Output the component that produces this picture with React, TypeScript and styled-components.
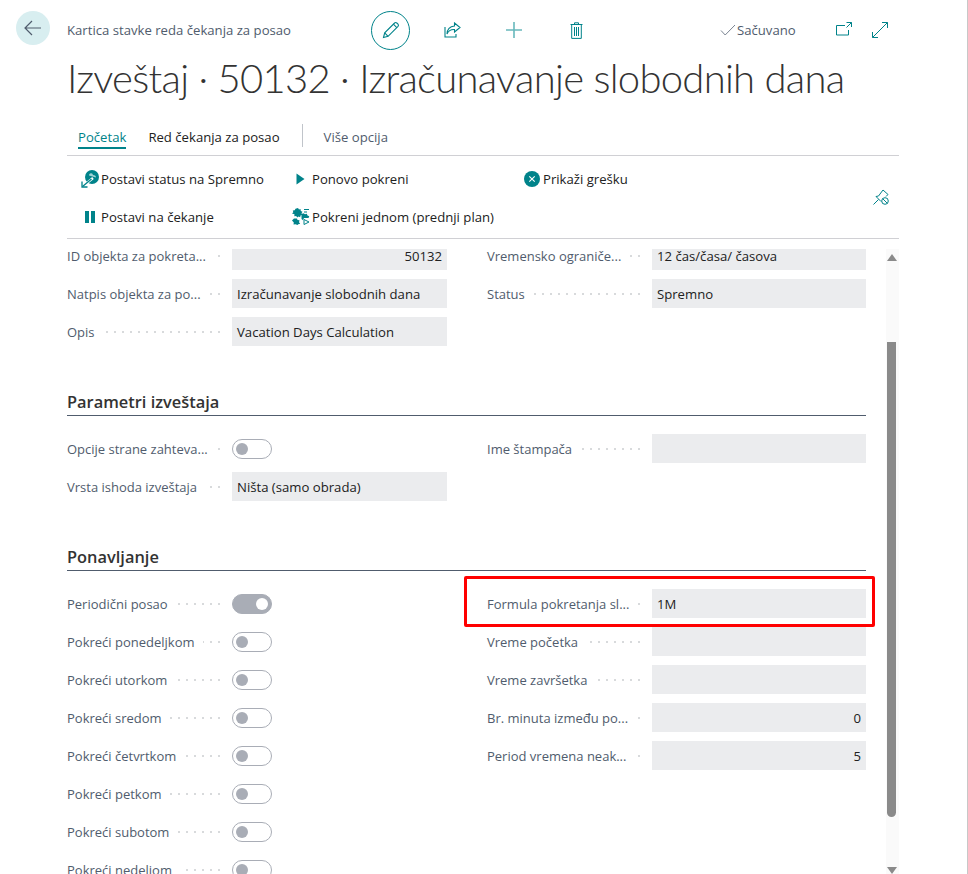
import styled, { createGlobalStyle } from 'styled-components';

const teal = '#00838a';
const slate = '#505c6d';
const ink = '#212121';

const GlobalStyle = createGlobalStyle`
  html, body {
    margin: 0;
    padding: 0;
    background: #fff;
    font-family: "Open Sans", "Liberation Sans", sans-serif;
    overflow: hidden;
  }
`

const Page = styled.div`
  width: 967px;
  height: 874px;
  border-right: 1px solid #c8c8c8;
  display: flex;
  flex-direction: column;
  overflow: hidden;
  background: #fff;
`

const Header = styled.div`
  display: flex;
  align-items: center;
  height: 60px;
  padding-left: 16px;
  flex: none;
`

const BackButton = styled.div`
  width: 34px;
  height: 34px;
  border-radius: 50%;
  background: #d8eef0;
  display: flex;
  align-items: center;
  justify-content: center;
  margin: -4px 17px 0 0;
`

const Breadcrumb = styled.div`
  flex: 0 0 304px;
  font-size: 13.15px;
  color: ${slate};
`

const EditButton = styled.div`
  width: 37px;
  height: 37px;
  border: 1px solid ${teal};
  border-radius: 50%;
  display: flex;
  align-items: center;
  justify-content: center;
  margin-right: 11px;
`

const HeaderAction = styled.div`
  width: 62px;
  display: flex;
  justify-content: center;
`

const Saved = styled.div`
  display: flex;
  align-items: center;
  gap: 1px;
  margin-left: 113px;
  font-size: 13.15px;
  color: ${slate};
`

const WindowActions = styled.div`
  display: flex;
  gap: 20px;
  margin-left: 40px;
`

const Title = styled.h1`
  margin: 0;
  padding-left: 67px;
  height: 46px;
  line-height: 37px;
  font-family: Lato, "Open Sans", sans-serif;
  font-size: 40px;
  font-weight: 300;
  letter-spacing: -0.72px;
  color: #333;
  white-space: nowrap;
  flex: none;
`

const Tabs = styled.div`
  display: flex;
  align-items: flex-start;
  height: 36px;
  margin: 13px 68px 0 67px;
  padding-left: 11px;
  border-bottom: 1px solid #d0d0d4;
  flex: none;
`

const Tab = styled.div<{ $active?: boolean; $muted?: boolean }>`
  height: 22px;
  margin-top: 6px;
  margin-right: 22px;
  line-height: 24px;
  font-size: 13.15px;
  color: ${p => (p.$active ? teal : p.$muted ? slate : ink)};
  border-bottom: ${p => (p.$active ? `2px solid ${teal}` : 'none')};
`

const TabDivider = styled.div`
  width: 1px;
  height: 23px;
  margin: 5px 21px 0 0;
  background: #c0c4ca;
`

const ActionBar = styled.div`
  display: flex;
  align-items: center;
  height: 82px;
  margin: 0 68px 0 67px;
  padding-left: 13px;
  border-bottom: 1px solid #d0d0d4;
  flex: none;
`

const ActionGrid = styled.div`
  display: grid;
  grid-template-columns: 211px 231px 1fr;
  grid-auto-rows: 38px;
  flex: 1;
`

const Action = styled.div`
  display: flex;
  align-items: center;
  gap: 2px;
  padding-top: 1px;
  font-size: 13.15px;
  color: ${ink};
  white-space: nowrap;
`

const ActionIcon = styled.span`
  width: 19px;
  height: 19px;
  display: flex;
  align-items: center;
  justify-content: center;
  flex: none;
`

const PinButton = styled.div`
  display: flex;
  margin-right: 10px;
`

const Body = styled.div`
  flex: 1;
  min-height: 0;
  display: flex;
  margin-top: 10px;
  margin-right: 68px;
`

const Viewport = styled.div`
  flex: 1;
  overflow: hidden;
  padding: 0 20px 0 67px;
`

const Content = styled.div`
  margin-top: -8px;
`

const FieldGrid = styled.div`
  display: grid;
  grid-template-columns: 380px 379px;
  column-gap: 40px;
  align-items: start;
`

const Column = styled.div`
  position: relative;
`

const Row = styled.div`
  display: flex;
  align-items: center;
  height: 29px;
  margin-bottom: 9px;
`

const LabelCell = styled.div`
  display: flex;
  align-items: center;
  flex: 0 0 165px;
  padding-right: 12px;
  box-sizing: border-box;
`

const Label = styled.span`
  font-size: 13px;
  color: ${slate};
  white-space: nowrap;
`

const Leader = styled.span`
  flex: 1;
  height: 2px;
  margin-left: 8px;
  background: repeating-linear-gradient(to left, #d8dadc 0 2px, transparent 2px 8px);
`

const Field = styled.div<{ $right?: boolean }>`
  flex: 1;
  height: 29px;
  line-height: 31px;
  padding: 0 5px;
  box-sizing: border-box;
  background: #ebecee;
  font-size: 13.15px;
  color: ${ink};
  text-align: ${p => (p.$right ? 'right' : 'left')};
  white-space: nowrap;
`

const Switch = styled.div<{ $on?: boolean }>`
  width: 40px;
  height: 20px;
  box-sizing: border-box;
  border: 1px solid #a9adb6;
  border-radius: 10px;
  background: ${p => (p.$on ? '#a9adb6' : '#fff')};
  display: flex;
  align-items: center;
  justify-content: ${p => (p.$on ? 'flex-end' : 'flex-start')};
  padding: 0 3px;
`

const Knob = styled.span<{ $on?: boolean }>`
  width: 12px;
  height: 12px;
  border-radius: 50%;
  background: ${p => (p.$on ? '#fff' : '#a9adb6')};
`

const SectionTitle = styled.h2`
  display: flex;
  align-items: flex-end;
  height: 61px;
  box-sizing: border-box;
  margin: 0 0 18px;
  padding-bottom: 2px;
  border-bottom: 1px solid ${slate};
  font-size: 16.4px;
  font-weight: 600;
  color: #333;
`

const Highlight = styled.div`
  position: absolute;
  left: -23px;
  top: -13px;
  width: 411px;
  height: 51px;
  box-sizing: border-box;
  border: 3px solid #ff0000;
  border-radius: 2px;
  pointer-events: none;
`

const ScrollTrack = styled.div`
  flex: 0 0 13px;
  box-sizing: border-box;
  padding-right: 2px;
  display: flex;
  flex-direction: column;
  align-items: center;
  background: #fafafa;
`

const ScrollArrow = styled.span<{ $down?: boolean }>`
  width: 0;
  height: 0;
  border-left: 5px solid transparent;
  border-right: 5px solid transparent;
  ${p => (p.$down ? 'border-top: 7px solid #8a8a8a;' : 'border-bottom: 7px solid #8a8a8a;')}
  margin-top: ${p => (p.$down ? '50px' : '5px')};
`

const ScrollThumb = styled.div`
  width: 9px;
  height: 475px;
  margin-top: 81px;
  background: #8a8a8a;
  border-radius: 0 0 5px 5px;
`

const ArrowLeftIcon = () => (
  <svg width="18" height="16" viewBox="0 0 18 16" fill="none" stroke={slate} strokeWidth="1.2">
    <path d="M1 8h16M8 1 1 8l7 7" />
  </svg>
)

const PencilIcon = () => (
  <svg width="18" height="18" viewBox="0 0 18 18" fill="none" stroke={teal} strokeWidth="1.1">
    <path d="M1.5 16.5l1.2-4.6L12.6 2a1.6 1.6 0 0 1 2.2 0l1.2 1.2a1.6 1.6 0 0 1 0 2.2L6.1 15.3z" />
    <path d="M2.7 11.9l3.4 3.4M11.4 3.2l3.4 3.4" />
  </svg>
)

const ShareIcon = () => (
  <svg width="17" height="16" viewBox="0 0 17 16" fill="none" stroke={teal} strokeWidth="1.1">
    <path d="M1 5v10h11v-3" />
    <path d="M10.5 1l5.5 4.5L10.5 10V7.5C7 7.3 4.5 8.5 3 12c.2-4.800 3-7.600 7.500-8z" />
  </svg>
)

const PlusIcon = () => (
  <svg width="16" height="16" viewBox="0 0 16 16" stroke="#68b8bc" strokeWidth="1.6">
    <path d="M8 0v16M0 8h16" />
  </svg>
)

const TrashIcon = () => (
  <svg width="13" height="17" viewBox="0 0 13 17" fill="none" stroke={teal} strokeWidth="1">
    <path d="M0.500 2.500h12M4.500 2.500V0.800h4v1.700M1.700 2.500v13.900h9.600V2.500M4.500 5v9M6.500 5v9M8.500 5v9" />
  </svg>
)

const CheckIcon = () => (
  <svg width="16" height="12" viewBox="0 0 16 12" fill="none" stroke="#7a8492" strokeWidth="1">
    <path d="M1 6.500l4.200 4.500L15 1" />
  </svg>
)

const OpenNewIcon = () => (
  <svg width="16" height="14" viewBox="0 0 16 14" fill="none" stroke={teal} strokeWidth="1">
    <path d="M9 3.500H0.500v9.500h12V8M10.500 0.500h5v4.500M15.500 0.500l-5 5" />
  </svg>
)

const ExpandIcon = () => (
  <svg width="16" height="16" viewBox="0 0 16 16" fill="none" stroke={teal} strokeWidth="1">
    <path d="M10 0.500h5.500V6M15.500 0.500L0.500 15.500M0.500 10v5.500H6" />
  </svg>
)

const StatusIcon = () => (
  <svg width="18" height="18" viewBox="0 0 18 18">
    <circle cx="11" cy="7" r="7" fill={teal} />
    <path d="M8 5.500a2 2 0 0 1 4-.5c2 .2 3 1 3 2.500" fill="#9fd2d4" />
    <path d="M1 17l11-9" stroke="#fff" strokeWidth="2.400" />
    <path d="M1.500 16.500l9-7.500" stroke={teal} strokeWidth="1.300" fill="none" />
    <path d="M1 11.500v5.500h5.500" stroke={teal} strokeWidth="1.300" fill="none" />
  </svg>
)

const PlayIcon = () => (
  <svg width="9" height="12" viewBox="0 0 9 12">
    <path d="M0.500 0.500l8 5.500-8 5.500z" fill={teal} />
  </svg>
)

const CrossCircleIcon = () => (
  <svg width="16" height="16" viewBox="0 0 16 16">
    <circle cx="8" cy="8" r="8" fill={teal} />
    <path d="M5.300 5.300l5.400 5.400M10.700 5.300l-5.400 5.400" stroke="#fff" strokeWidth="1.100" />
  </svg>
)

const PauseIcon = () => (
  <svg width="10" height="12" viewBox="0 0 10 12" fill={teal}>
    <rect x="0" y="0" width="4" height="12" />
    <rect x="6" y="0" width="4" height="12" />
  </svg>
)

const RunOnceIcon = () => (
  <svg width="18" height="17" viewBox="0 0 18 17" fill={teal}>
    <path d="M6 0l1 1.500 1.500-.5.300 2 1.700.8-1 1.500.8 1.500-1.800.6-.3 1.800-1.700-.6-1.300 1-1-1.500-1.900.1.200-1.900L0 5.500l1.300-1.300L.8 2.500l1.900-.2L3.500 .7z" />
    <path d="M12 1h5v1h-5zM12 3.500l3 0 0 1-3 0z" />
    <path d="M2 10.500h3l.5 1.500 2 .3-.5 2 1.200 1.500-2 .5-.7 .7-2-.8-2 .3.300-2L0 12.500z" />
    <path d="M9.500 6l2-.8 1.500 1 1.800-.5.700 1.800 1.800.7-.8 1.800H12l-1 2.300-1.500-1.300z" />
    <path d="M12 11.500l5 2.500-5 2.500z" fill="#fff" stroke={teal} strokeWidth="1" />
  </svg>
)

const UnpinIcon = () => (
  <svg width="16" height="16" viewBox="0 0 16 16" fill="none" stroke={teal} strokeWidth="1">
    <path d="M0.500 15.500l5-5M3 7.500l2.500-.5L10 1l5 4.500-2 2M3 7.500L8 12.500" />
    <circle cx="12" cy="12" r="3.300" />
    <path d="M9.800 9.800l4.400 4.400" />
  </svg>
)

type RowData = { label: string; value?: string; right?: boolean; toggle?: boolean; on?: boolean }

const FieldRow = ({ label, value, right, toggle, on }: RowData) => (
  <Row>
    <LabelCell>
      <Label>{label}</Label>
      <Leader />
    </LabelCell>
    {toggle ? (
      <Switch $on={on}><Knob $on={on} /></Switch>
    ) : (
      <Field $right={right}>{value}</Field>
    )}
  </Row>
)

const generalLeft: RowData[] = [
  { label: 'ID objekta za pokreta...', value: '50132', right: true },
  { label: 'Natpis objekta za po...', value: 'Izračunavanje slobodnih dana' },
  { label: 'Opis', value: 'Vacation Days Calculation' },
]

const generalRight: RowData[] = [
  { label: 'Vremensko ograniče...', value: '12 čas/časa/ časova' },
  { label: 'Status', value: 'Spremno' },
]

const reportLeft: RowData[] = [
  { label: 'Opcije strane zahteva...', toggle: true },
  { label: 'Vrsta ishoda izveštaja', value: 'Ništa (samo obrada)' },
]

const recurrenceLeft: RowData[] = [
  { label: 'Periodični posao', toggle: true, on: true },
  { label: 'Pokreći ponedeljkom', toggle: true },
  { label: 'Pokreći utorkom', toggle: true },
  { label: 'Pokreći sredom', toggle: true },
  { label: 'Pokreći četvrtkom', toggle: true },
  { label: 'Pokreći petkom', toggle: true },
  { label: 'Pokreći subotom', toggle: true },
  { label: 'Pokreći nedeljom', toggle: true },
]

const recurrenceRight: RowData[] = [
  { label: 'Formula pokretanja sl...', value: '1M' },
  { label: 'Vreme početka' },
  { label: 'Vreme završetka' },
  { label: 'Br. minuta između po...', value: '0', right: true },
  { label: 'Period vremena neak...', value: '5', right: true },
]

const App = (): JSX.Element => {
  return (
    <Page>
      <GlobalStyle />
      <Header>
        <BackButton><ArrowLeftIcon /></BackButton>
        <Breadcrumb>Kartica stavke reda čekanja za posao</Breadcrumb>
        <EditButton><PencilIcon /></EditButton>
        <HeaderAction><ShareIcon /></HeaderAction>
        <HeaderAction><PlusIcon /></HeaderAction>
        <HeaderAction><TrashIcon /></HeaderAction>
        <Saved><CheckIcon />Sačuvano</Saved>
        <WindowActions>
          <OpenNewIcon />
          <ExpandIcon />
        </WindowActions>
      </Header>
      <Title>Izveštaj · 50132 · Izračunavanje slobodnih dana</Title>
      <Tabs>
        <Tab $active>Početak</Tab>
        <Tab>Red čekanja za posao</Tab>
        <TabDivider />
        <Tab $muted>Više opcija</Tab>
      </Tabs>
      <ActionBar>
        <ActionGrid>
          <Action><ActionIcon><StatusIcon /></ActionIcon>Postavi status na Spremno</Action>
          <Action><ActionIcon><PlayIcon /></ActionIcon>Ponovo pokreni</Action>
          <Action><ActionIcon><CrossCircleIcon /></ActionIcon>Prikaži grešku</Action>
          <Action><ActionIcon><PauseIcon /></ActionIcon>Postavi na čekanje</Action>
          <Action><ActionIcon><RunOnceIcon /></ActionIcon>Pokreni jednom (prednji plan)</Action>
        </ActionGrid>
        <PinButton><UnpinIcon /></PinButton>
      </ActionBar>
      <Body>
        <Viewport>
          <Content>
            <FieldGrid>
              <Column>{generalLeft.map(r => <FieldRow key={r.label} {...r} />)}</Column>
              <Column>{generalRight.map(r => <FieldRow key={r.label} {...r} />)}</Column>
            </FieldGrid>
            <SectionTitle>Parametri izveštaja</SectionTitle>
            <FieldGrid>
              <Column>{reportLeft.map(r => <FieldRow key={r.label} {...r} />)}</Column>
              <Column><FieldRow label="Ime štampača" /></Column>
            </FieldGrid>
            <SectionTitle>Ponavljanje</SectionTitle>
            <FieldGrid>
              <Column>{recurrenceLeft.map(r => <FieldRow key={r.label} {...r} />)}</Column>
              <Column>
                {recurrenceRight.map(r => <FieldRow key={r.label} {...r} />)}
                <Highlight />
              </Column>
            </FieldGrid>
          </Content>
        </Viewport>
        <ScrollTrack>
          <ScrollArrow />
          <ScrollThumb />
          <ScrollArrow $down />
        </ScrollTrack>
      </Body>
    </Page>
  )
}

export default App
